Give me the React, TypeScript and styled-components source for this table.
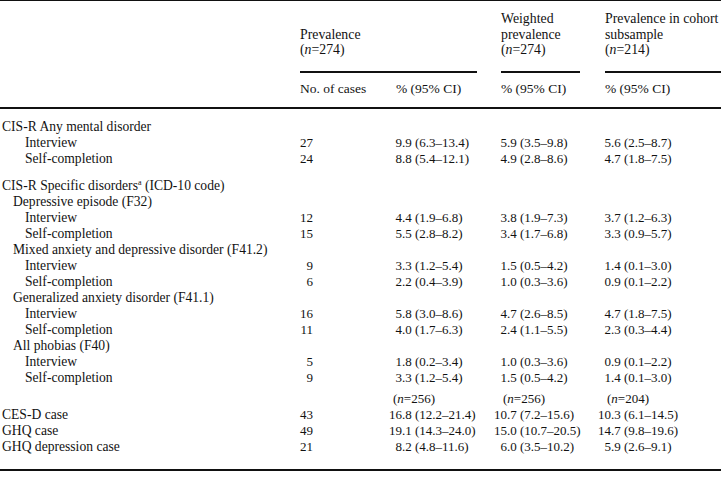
import React from "react";
import styled, { createGlobalStyle } from "styled-components";

const GlobalStyle = createGlobalStyle`
  html, body {
    margin: 0;
    padding: 0;
    background: #fff;
  }
  body {
    font-family: "Liberation Serif", "Times New Roman", serif;
    font-size: 13px;
    color: #121212;
  }
`;

const PITCH = 16;

const Table = styled.div`
  width: 721px;
  border-top: 1px solid #111;
  display: grid;
  grid-template-columns: 300px 89px 105px 104px 123px;
`;

const HeadRow = styled.div`
  display: contents;
`;

const GroupHead = styled.div<{ $span?: number }>`
  grid-column: span ${(p) => p.$span ?? 1};
  padding-left: ${(p) => (p.$span && p.$span > 1 ? 0 : 7)}px;
  padding-top: 10px;
  display: flex;
  flex-direction: column;
  justify-content: flex-end;
`;

const GroupTitle = styled.div<{ $right?: number }>`
  font-size: 13.8px;
  line-height: 15.5px;
  padding-bottom: 13px;
  margin-right: ${(p) => p.$right ?? 0}px;
  border-bottom: 2px solid #111;
  white-space: nowrap;
`;

const SubHead = styled.div<{ $pad?: number }>`
  font-size: 13.5px;
  padding: 8px 0 11px ${(p) => p.$pad ?? 7}px;
  line-height: 15px;
  border-bottom: 2px solid #111;
`;

const Blank = styled.div<{ $rule?: boolean }>`
  border-bottom: ${(p) => (p.$rule ? "2px solid #111" : "none")};
`;

const Label = styled.div<{ $level: number; $gapTop?: number }>`
  grid-column: 1;
  font-size: 13.6px;
  padding-left: ${(p) => [2, 13, 25][p.$level]}px;
  padding-top: ${(p) => p.$gapTop ?? 0}px;
  line-height: ${PITCH}px;
  white-space: nowrap;
`;

const Count = styled.div<{ $gapTop?: number }>`
  padding-top: ${(p) => p.$gapTop ?? 0}px;
  line-height: ${PITCH}px;
  width: 13px;
  text-align: right;
`;

const Cell = styled.div<{ $gapTop?: number }>`
  padding-top: ${(p) => p.$gapTop ?? 0}px;
  line-height: ${PITCH}px;
  display: flex;
  white-space: nowrap;
`;

const Whole = styled.span`
  width: 13px;
  text-align: right;
`;

const NoteCell = styled.div<{ $shift: number }>`
  padding-left: ${(p) => p.$shift}px;
  line-height: ${PITCH}px;
`;

const Sup = styled.sup`
  font-size: 8px;
  line-height: 0;
  vertical-align: 5px;
`;

const Foot = styled.div`
  grid-column: 1 / -1;
  border-top: 2px solid #111;
  margin-top: 14px;
`;

const Spacer = styled.div<{ $h: number }>`
  grid-column: 1 / -1;
  height: ${(p) => p.$h}px;
`;

const Value = ({ v }: { v: string }) => {
  const dot = v.indexOf(".");
  return (
    <>
      <Whole>{v.slice(0, dot)}</Whole>
      <span>{v.slice(dot)}</span>
    </>
  );
};

type Row = {
  label: React.ReactNode;
  level: number;
  gap?: number;
  count?: string;
  vals?: [string, string, string];
};

const N = ({ n }: { n: string }) => (
  <>
    (<i>n</i>={n})
  </>
);

const rows: Row[] = [
  { label: "CIS-R Any mental disorder", level: 0, gap: 10 },
  { label: "Interview", level: 2, count: "27", vals: ["9.9 (6.3–13.4)", "5.9 (3.5–9.8)", "5.6 (2.5–8.7)"] },
  { label: "Self-completion", level: 2, count: "24", vals: ["8.8 (5.4–12.1)", "4.9 (2.8–8.6)", "4.7 (1.8–7.5)"] },
  {
    label: (
      <>
        CIS-R Specific disorders<Sup>a</Sup> (ICD-10 code)
      </>
    ),
    level: 0,
    gap: 11,
  },
  { label: "Depressive episode (F32)", level: 1 },
  { label: "Interview", level: 2, count: "12", vals: ["4.4 (1.9–6.8)", "3.8 (1.9–7.3)", "3.7 (1.2–6.3)"] },
  { label: "Self-completion", level: 2, count: "15", vals: ["5.5 (2.8–8.2)", "3.4 (1.7–6.8)", "3.3 (0.9–5.7)"] },
  { label: "Mixed anxiety and depressive disorder (F41.2)", level: 1 },
  { label: "Interview", level: 2, count: "9", vals: ["3.3 (1.2–5.4)", "1.5 (0.5–4.2)", "1.4 (0.1–3.0)"] },
  { label: "Self-completion", level: 2, count: "6", vals: ["2.2 (0.4–3.9)", "1.0 (0.3–3.6)", "0.9 (0.1–2.2)"] },
  { label: "Generalized anxiety disorder (F41.1)", level: 1 },
  { label: "Interview", level: 2, count: "16", vals: ["5.8 (3.0–8.6)", "4.7 (2.6–8.5)", "4.7 (1.8–7.5)"] },
  { label: "Self-completion", level: 2, count: "11", vals: ["4.0 (1.7–6.3)", "2.4 (1.1–5.5)", "2.3 (0.3–4.4)"] },
  { label: "All phobias (F40)", level: 1 },
  { label: "Interview", level: 2, count: "5", vals: ["1.8 (0.2–3.4)", "1.0 (0.3–3.6)", "0.9 (0.1–2.2)"] },
  { label: "Self-completion", level: 2, count: "9", vals: ["3.3 (1.2–5.4)", "1.5 (0.5–4.2)", "1.4 (0.1–3.0)"] },
];

const scales: Row[] = [
  { label: "CES-D case", level: 0, count: "43", vals: ["16.8 (12.2–21.4)", "10.7 (7.2–15.6)", "10.3 (6.1–14.5)"] },
  { label: "GHQ case", level: 0, count: "49", vals: ["19.1 (14.3–24.0)", "15.0 (10.7–20.5)", "14.7 (9.8–19.6)"] },
  { label: "GHQ depression case", level: 0, count: "21", vals: ["8.2 (4.8–11.6)", "6.0 (3.5–10.2)", "5.9 (2.6–9.1)"] },
];

const BodyRow = ({ r }: { r: Row }) => (
  <>
    <Label $level={r.level} $gapTop={r.gap}>
      {r.label}
    </Label>
    <Count $gapTop={r.gap}>{r.count}</Count>
    {[0, 1, 2].map((i) => (
      <Cell key={i} $gapTop={r.gap}>
        {r.vals ? <Value v={r.vals[i]} /> : null}
      </Cell>
    ))}
  </>
);

export default function App() {
  return (
    <>
      <GlobalStyle />
      <Table>
        <HeadRow>
          <Blank />
          <GroupHead $span={2}>
            <GroupTitle $right={17}>
              Prevalence
              <br />
              <N n="274" />
            </GroupTitle>
          </GroupHead>
          <GroupHead>
            <GroupTitle $right={18}>
              Weighted
              <br />
              prevalence
              <br />
              <N n="274" />
            </GroupTitle>
          </GroupHead>
          <GroupHead>
            <GroupTitle>
              Prevalence in cohort
              <br />
              subsample
              <br />
              <N n="214" />
            </GroupTitle>
          </GroupHead>
        </HeadRow>
        <HeadRow>
          <Blank $rule />
          <SubHead $pad={0}>No. of cases</SubHead>
          <SubHead>% (95% CI)</SubHead>
          <SubHead>% (95% CI)</SubHead>
          <SubHead>% (95% CI)</SubHead>
        </HeadRow>
        {rows.map((r, i) => (
          <BodyRow key={i} r={r} />
        ))}
        <Spacer $h={5} />
        <Label $level={0} />
        <Count />
        <NoteCell $shift={4}>
          <N n="256" />
        </NoteCell>
        <NoteCell $shift={9}>
          <N n="256" />
        </NoteCell>
        <NoteCell $shift={9}>
          <N n="204" />
        </NoteCell>
        {scales.map((r, i) => (
          <BodyRow key={i} r={r} />
        ))}
        <Foot />
      </Table>
    </>
  );
}
